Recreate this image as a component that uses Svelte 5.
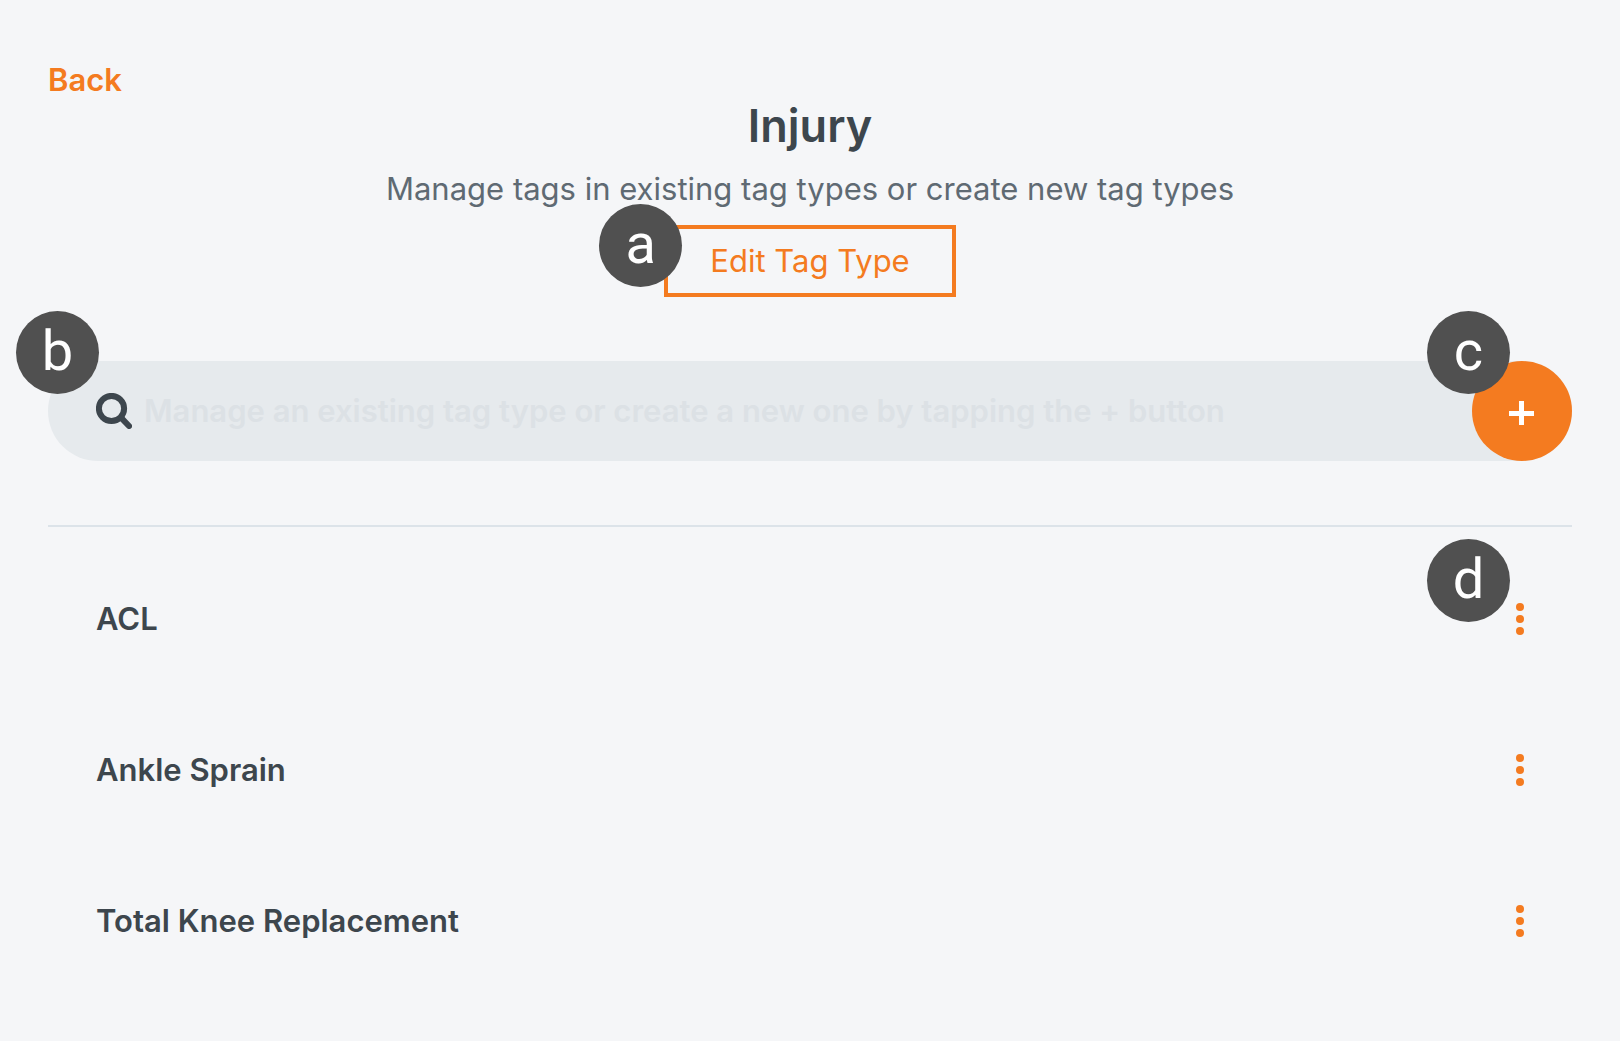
<script>
	let search = ''

	const tags = [
		{ id: 1, name: 'ACL', callout: 'd' },
		{ id: 2, name: 'Ankle Sprain' },
		{ id: 3, name: 'Total Knee Replacement' },
	]
</script>

<main>
	<nav>
		<a href="#tag-types">Back</a>
	</nav>

	<header>
		<h1>Injury</h1>
		<p>Manage tags in existing tag types or create new tag types</p>
		<div class="edit-wrap">
			<button class="edit">Edit Tag Type</button>
			<span class="callout on-edit">a</span>
		</div>
	</header>

	<div class="search">
		<label for="search" aria-label="Search tags">
			<svg width="36" height="36" viewBox="0 0 36 36" fill="none" stroke="#3d464d" stroke-width="6">
				<circle cx="15.5" cy="15.5" r="12.6" />
				<path d="M25.5 25.2L33 33" stroke-linecap="round" />
			</svg>
		</label>
		<input
			id="search"
			type="text"
			placeholder="Manage an existing tag type or create a new one by tapping the + button"
			bind:value={search}
		/>
		<span class="callout on-search">b</span>
		<div class="add-wrap">
			<button class="add" aria-label="Add tag">
				<svg width="26" height="26" viewBox="0 0 26 26" stroke="#fff" stroke-width="5">
					<path d="M12.5 1v24M0 13.5h25" />
				</svg>
			</button>
			<span class="callout on-add">c</span>
		</div>
	</div>

	<ul>
		{#each tags as tag (tag.id)}
			<li>
				<span>{tag.name}</span>
				<div class="menu-wrap">
					<button class="menu" aria-label={`Options for ${tag.name}`}>
						<svg width="8" height="32" viewBox="0 0 8 32" fill="#f47b20">
							<circle cx="4" cy="4" r="4" />
							<circle cx="4" cy="16" r="4" />
							<circle cx="4" cy="28" r="4" />
						</svg>
					</button>
					{#if tag.callout}
						<span class="callout on-menu">{tag.callout}</span>
					{/if}
				</div>
			</li>
		{/each}
	</ul>
</main>

<style>
	:global(body) {
		margin: 0;
		background: #f5f6f8;
	}

	main {
		padding: 60px 48px 43px;
		font-family: Inter, 'Liberation Sans', sans-serif;
		font-size: 31px;
		line-height: 40px;
		color: #3d464d;
	}

	button {
		padding: 0;
		border: none;
		background: none;
		font: inherit;
		color: #f47b20;
		cursor: pointer;
	}

	svg {
		display: block;
	}

	nav {
		display: flex;
	}

	a {
		color: #f47b20;
		font-weight: 600;
		text-decoration: none;
	}

	header {
		display: flex;
		flex-direction: column;
		align-items: center;
		text-align: center;
	}

	h1 {
		margin: 0;
		font-size: 45px;
		line-height: 52px;
		font-weight: 600;
	}

	p {
		margin: 17px 0 16px;
		color: #5f6a73;
	}

	.edit-wrap,
	.add-wrap,
	.menu-wrap {
		position: relative;
	}

	.edit {
		display: block;
		box-sizing: border-box;
		height: 72px;
		padding: 0 42px;
		border: 4px solid #f47b20;
	}

	.search {
		position: relative;
		display: flex;
		align-items: center;
		height: 100px;
		margin: 64px 0;
		padding-left: 48px;
		border-radius: 50px;
		background: #e6eaed;
	}

	input {
		flex: 1;
		min-width: 0;
		padding: 0 12px;
		border: none;
		outline: none;
		background: none;
		font: inherit;
		font-weight: 600;
		color: #3d464d;
	}

	input::placeholder {
		color: #dce1e5;
		opacity: 1;
	}

	.add {
		display: flex;
		align-items: center;
		justify-content: center;
		width: 100px;
		height: 100px;
		padding-top: 4px;
		border-radius: 50%;
		background: #f47b20;
	}

	ul {
		margin: 0;
		padding: 16px 0 0;
		border-top: 2px solid #dce3e9;
		list-style: none;
	}

	li {
		display: flex;
		align-items: center;
		justify-content: space-between;
		height: 151px;
		padding: 0 24px 0 48px;
		font-weight: 600;
	}

	.menu {
		display: flex;
		align-items: center;
		justify-content: center;
		width: 56px;
		height: 56px;
	}

	/* lettered markers that sit on the corner of each control */
	.callout {
		position: absolute;
		width: 83px;
		height: 83px;
		border-radius: 50%;
		background: #505050;
		color: #fff;
		font-family: Roboto, sans-serif;
		font-size: 56px;
		font-weight: 400;
		line-height: 80px;
		text-align: center;
	}

	.on-edit {
		left: -65px;
		top: -21px;
	}

	.on-search {
		left: -32px;
		top: -50px;
	}

	.on-add {
		left: -45px;
		top: -50px;
	}

	.on-menu {
		left: -65px;
		top: -52px;
	}
</style>
